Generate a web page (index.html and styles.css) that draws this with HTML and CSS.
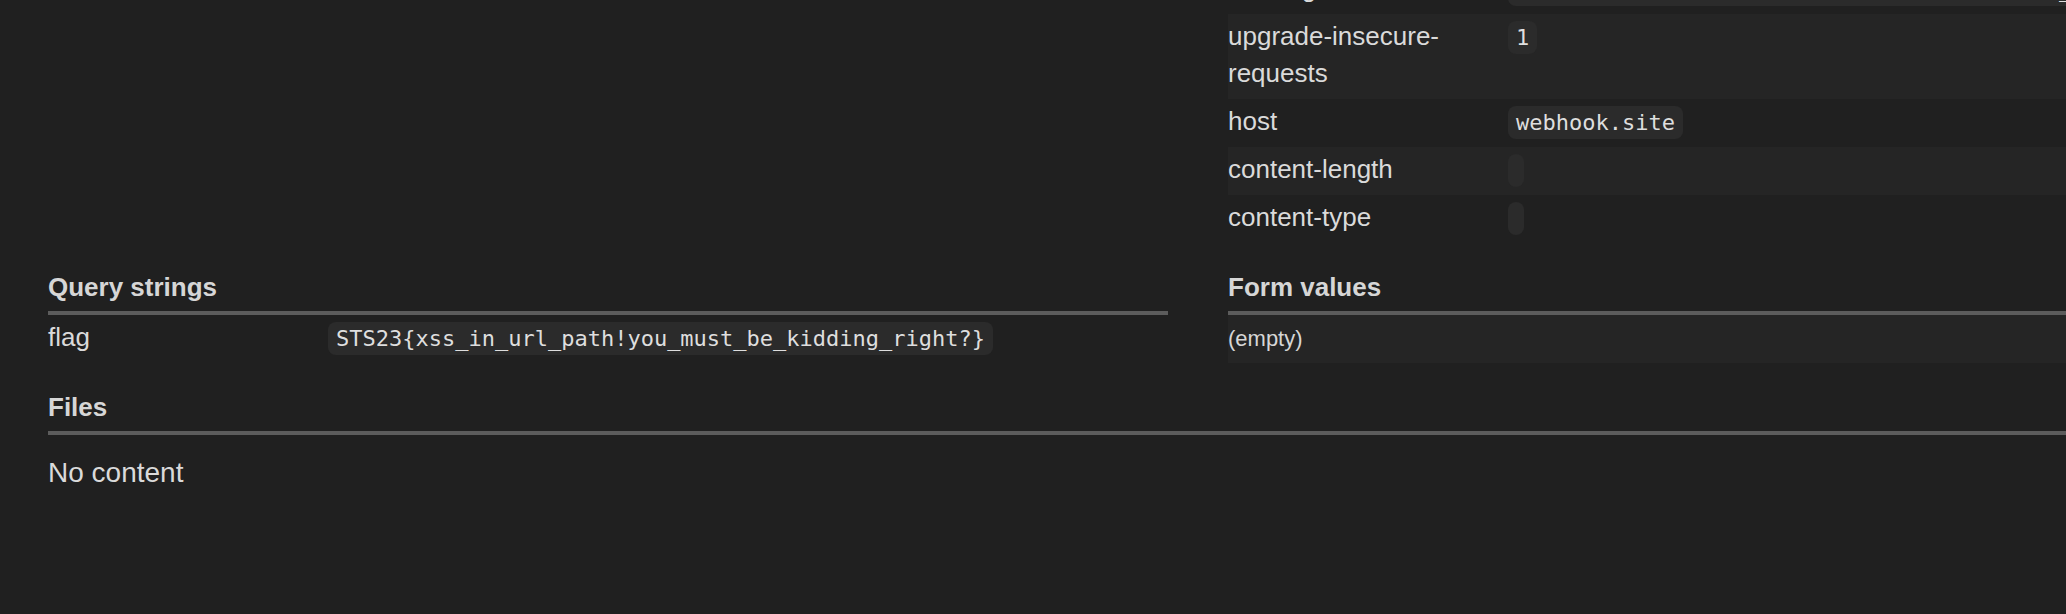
FILE: index.html
```html
<!DOCTYPE html>
<html>
<head>
<meta charset="utf-8">
<link rel="stylesheet" href="styles.css">
</head>
<body>
<div class="page">
  <div class="cols">
    <div class="col"></div>
    <div class="col">
      <div class="kv">
        <div class="row"><div class="key">user-agent</div><div class="val"><code class="nowrap">Mozilla/5.0 (Macintosh; Intel Mac OS X 10_15_7) AppleWebKit/537.36 (KHTML, like Gecko) Chrome/117.0.0.0 Safari/537.36</code></div></div>
        <div class="row striped"><div class="key">upgrade-insecure-requests</div><div class="val"><code>1</code></div></div>
        <div class="row"><div class="key">host</div><div class="val"><code>webhook.site</code></div></div>
        <div class="row striped"><div class="key">content-length</div><div class="val"><code></code></div></div>
        <div class="row"><div class="key">content-type</div><div class="val"><code></code></div></div>
      </div>
    </div>
  </div>
  <div class="cols">
    <section class="col">
      <h3 class="heading">Query strings</h3>
      <div class="kv">
        <div class="row"><div class="key">flag</div><div class="val"><code>STS23{xss_in_url_path!you_must_be_kidding_right?}</code></div></div>
      </div>
    </section>
    <section class="col">
      <h3 class="heading">Form values</h3>
      <div class="kv">
        <div class="row striped"><div class="single"><small class="muted">(empty)</small></div></div>
      </div>
    </section>
  </div>
  <section class="full">
    <h3 class="heading">Files</h3>
    <p class="lead">No content</p>
  </section>
</div>
</body>
</html>
```

FILE: styles.css
```css
html, body {
  margin: 0;
  padding: 0;
  background: #202020;
  overflow: hidden;
}

body {
  font-family: "Liberation Sans", Arial, sans-serif;
  font-size: 26px;
  line-height: 37px;
  color: #dadada;
}

.page {
  width: 2300px;
  padding-left: 48px;
  margin-top: -34px;
}

.cols {
  display: grid;
  grid-template-columns: 1120px 1120px;
  column-gap: 60px;
}

.col {
  min-width: 0;
}

.kv {
  display: flex;
  flex-direction: column;
}

.row {
  display: grid;
  grid-template-columns: 280px minmax(0, 1fr);
  padding: 4px 0 7px 0;
}

.row.striped {
  background: #252525;
}

.key {
  padding-right: 40px;
}

.single {
  grid-column: 1 / span 2;
}

.val {
  min-width: 0;
}

code {
  font-family: "DejaVu Sans Mono", "Liberation Mono", monospace;
  font-size: 22px;
  line-height: 1;
  padding: 4px 8px;
  background: #2b2b2b;
  border-radius: 8px;
  color: #dedede;
}

code.nowrap {
  white-space: nowrap;
}

.muted {
  font-size: 22px;
  line-height: 1;
  color: #d6d6d6;
}

.heading {
  margin: 26px 0 0 0;
  font-size: 26px;
  line-height: 37px;
  font-weight: bold;
  color: #d6d6d6;
  padding-bottom: 5px;
  border-bottom: 4px solid #5c5c5c;
}

.lead {
  margin: 18px 0 0 0;
  font-size: 28px;
  line-height: 40px;
  color: #dadada;
}
```
